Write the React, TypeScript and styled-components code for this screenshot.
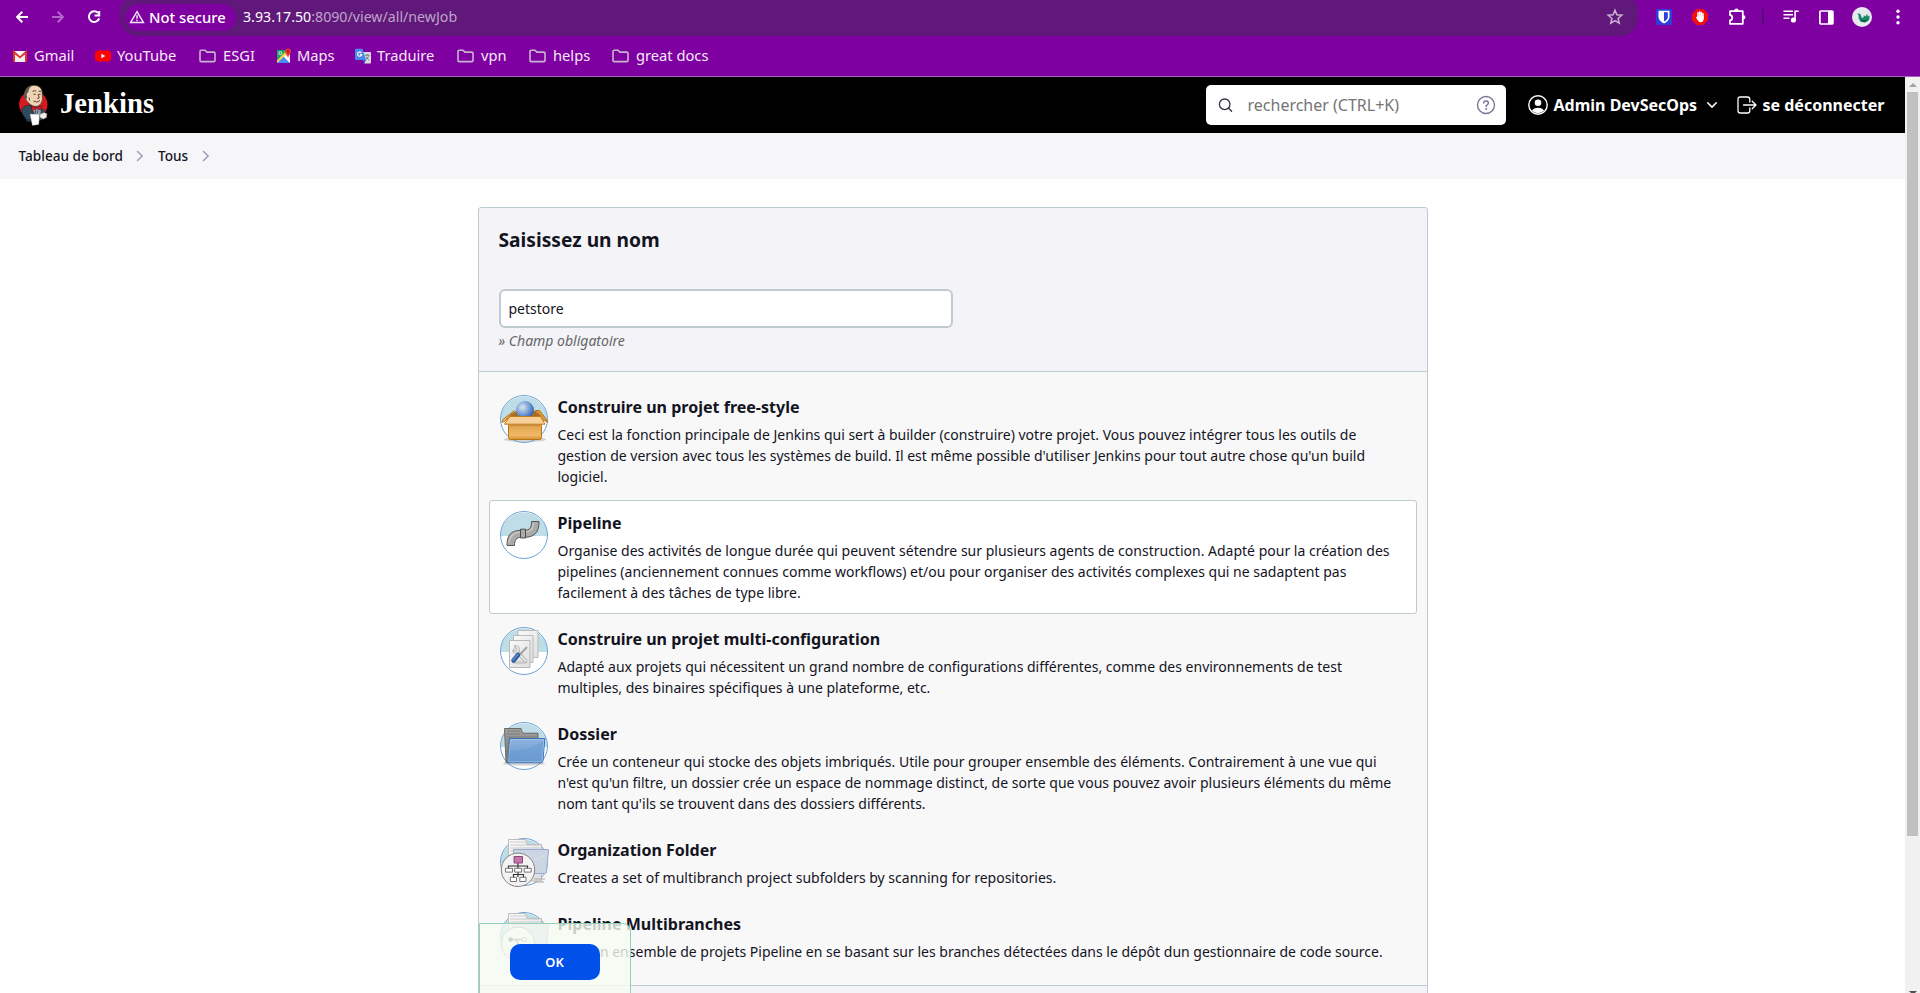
import React from "react";
import styled, { createGlobalStyle } from "styled-components";

const GlobalStyle = createGlobalStyle`
  *, *::before, *::after { box-sizing: border-box; }
  html, body { margin: 0; padding: 0; overflow: hidden; background: #fff; }
  body { font-family: "Noto Sans", sans-serif; color: #14141f; font-size: 14px; }
  svg { display: block; flex: none; }
`;

const Window = styled.div`
  width: 1920px;
  height: 993px;
  display: flex;
  flex-direction: column;
  overflow: hidden;
  background: #fff;
`;

/* Browser chrome */

const Toolbar = styled.div`
  height: 36px;
  flex: none;
  display: flex;
  background: #7f00a1;
  color: #fff;
`;

const NavButtons = styled.div`
  width: 120px;
  padding: 7px 0 0 12px;
  display: flex;
  gap: 16px;
`;

const Omnibox = styled.div`
  width: 1518px;
  height: 36px;
  padding: 0 14px 8px 5px;
  display: flex;
  align-items: center;
  background: #60197a;
  border-radius: 8px 8px 18px 18px;
`;

const SecurityChip = styled.div`
  width: 111px;
  height: 27px;
  margin-top: 7px;
  padding: 0 0 1px 4px;
  display: flex;
  align-items: center;
  gap: 4px;
  border-radius: 14px;
  background: #7f00a1;
  font-size: 14.8px;
  font-weight: 500;
  white-space: nowrap;
`;

const Url = styled.div`
  flex: 1;
  margin: 5px 0 0 7px;
  font-size: 14.2px;
  color: #bfa3ca;
  white-space: nowrap;
`;

const Host = styled.span`
  color: #fff;
`;

const StarSlot = styled.div`
  margin-top: 6px;
`;

const Extensions = styled.div`
  flex: 1;
  display: grid;
  grid-template-columns: 36px 36px 37px 16px 39px 32px 40px 32px;
  justify-items: center;
  align-items: center;
  height: 34px;
  padding-left: 8px;
`;

const Separator = styled.div`
  width: 2px;
  height: 16px;
  background: #560c78;
`;

const Bookmarks = styled.div`
  height: 41px;
  flex: none;
  display: flex;
  padding-left: 12px;
  background: #7f00a1;
  border-bottom: 1px solid #a65fbb;
  color: #f6e9f9;
  font-size: 14.7px;
`;

const Bookmark = styled.div<{ $width: number; $gap: number }>`
  width: ${(p) => p.$width}px;
  height: 40px;
  display: flex;
  align-items: center;
  gap: ${(p) => p.$gap}px;
  white-space: nowrap;
`;

const BookmarkLabel = styled.span`
  line-height: 20px;
  padding-bottom: 2px;
`;

/* Page */

const Viewport = styled.div`
  flex: 1;
  min-height: 0;
  display: flex;
`;

const Page = styled.div`
  width: 1905px;
  position: relative;
  overflow: hidden;
`;

const Header = styled.header`
  height: 56px;
  display: flex;
  align-items: center;
  padding-left: 18px;
  background: #000;
  color: #fff;
`;

const Brand = styled.div`
  flex: 1;
  display: flex;
  align-items: center;
  gap: 11px;
`;

const BrandName = styled.span`
  margin-top: -5px;
  font: bold 28.7px/34px "Liberation Serif", serif;
`;

const SearchBox = styled.div`
  width: 300px;
  height: 40px;
  margin-right: 22px;
  padding: 0 10px 0 12px;
  display: flex;
  align-items: center;
  border-radius: 5px;
  background: #fff;
`;

const Placeholder = styled.span`
  flex: 1;
  margin-left: 14.5px;
  font-size: 16px;
  color: #757575;
`;

const HeaderLink = styled.div<{ $width: number }>`
  width: ${(p) => p.$width}px;
  display: flex;
  align-items: center;
  font-size: 16px;
  font-weight: 700;
  white-space: nowrap;
`;

const LinkLabel = styled.span`
  margin: 0 9px 0 5.5px;
`;

const Breadcrumbs = styled.nav`
  height: 46px;
  display: flex;
  align-items: center;
  gap: 13.5px;
  padding: 0 0 1px 18.5px;
  background: #f6f6f8;
  font-size: 13.6px;
  font-weight: 500;
`;

const Panel = styled.main`
  width: 950px;
  margin: 28px auto 0;
  border: 1px solid #bdcacf;
  border-radius: 3px;
  background: #f3f3f8;
`;

const NameSection = styled.section`
  height: 163px;
  padding: 18px 20px 0;
`;

const Heading = styled.h1`
  margin: 0 0 35px;
  font-size: 19.2px;
  line-height: 28px;
  font-weight: 700;
`;

const NameInput = styled.input`
  display: block;
  width: 454px;
  height: 39px;
  padding: 0 8px;
  border: 2px solid #bfcbce;
  border-radius: 6px;
  background: #fff;
  color: #14141f;
  font: 14px "Noto Sans", sans-serif;
  outline: none;
`;

const Hint = styled.div`
  margin-top: 2px;
  color: #666;
  font-size: 14px;
  line-height: 21px;
  font-style: italic;
`;

const ItemList = styled.section`
  padding: 12px 10px 10px;
  border-top: 1px solid #bdcacf;
  border-bottom: 1px solid #bdcacf;
  background: #f8f8f8;
`;

const Item = styled.div<{ $selected?: boolean }>`
  display: flex;
  gap: 10px;
  margin-bottom: 2px;
  padding: 10px;
  border: 1px solid ${(p) => (p.$selected ? "#bdcacf" : "transparent")};
  border-radius: 3px;
  background: ${(p) => (p.$selected ? "#fff" : "transparent")};
`;

const ItemText = styled.div`
  flex: 1;
`;

const ItemTitle = styled.h2`
  margin: 0 0 5px;
  font-size: 16.05px;
  line-height: 24px;
  font-weight: 700;
`;

const ItemDescription = styled.p`
  margin: 0;
  font-size: 14px;
  line-height: 21px;
  color: #14141f;
`;

const Filler = styled.div`
  height: 60px;
`;

const SubmitBar = styled.div`
  position: absolute;
  left: 479px;
  bottom: -10px;
  width: 152px;
  height: 80px;
  padding: 20px 0 0 30px;
  border: 1px solid #93d0b9;
  border-top-right-radius: 8px;
  background: rgba(245, 251, 241, 0.8);
`;

const OkButton = styled.button`
  display: block;
  width: 90px;
  height: 36px;
  padding: 0 1px 0 0;
  border: 0;
  border-radius: 10px;
  background: #0150e9;
  color: #fff;
  font: 600 12.8px "Noto Sans", sans-serif;
`;

const Scrollbar = styled.div`
  width: 15px;
  height: 100%;
  display: flex;
  flex-direction: column;
  align-items: center;
  background: #f1f1f1;
`;

const Arrow = styled.div<{ $down?: boolean }>`
  width: 0;
  height: 0;
  flex: none;
  border: 4px solid transparent;
  ${(p) =>
    p.$down
      ? "border-top-color: #505050; border-bottom: 0; margin-top: 155px;"
      : "border-bottom-color: #a3a3a3; border-top: 0; margin: 6px 0 5px;"}
`;

const Thumb = styled.div`
  width: 11px;
  height: 744px;
  flex: none;
  background: #c1c1c1;
`;

/* Icons */

const BackIcon = ({ dim, flip }: { dim?: boolean; flip?: boolean }) => (
  <svg width="20" height="20" viewBox="0 0 20 20" fill="none" stroke={dim ? "#b266c7" : "#fff"} strokeWidth="2">
    <g transform={flip ? "translate(20 0) scale(-1 1)" : undefined}>
      <path d="M16 10H5.5M10.3 4.8 5.1 10l5.2 5.2" />
    </g>
  </svg>
);

const ReloadIcon = () => (
  <svg width="20" height="20" viewBox="0 0 20 20" fill="none" stroke="#fff" strokeWidth="2">
    <path d="M14.2 6.2A5.3 5.3 0 1 0 15.2 11.4" />
    <path d="M15.2 4v4.4h-4.6" />
  </svg>
);

const WarningIcon = () => (
  <svg width="16" height="14" viewBox="0 0 16 14" fill="none" stroke="#f5e6fa" strokeWidth="1.5">
    <path d="M8 1.6 14.4 12.4H1.6Z" />
    <path d="M8 5.2v3.6M8 9.7v1.6" />
  </svg>
);

const StarIcon = () => (
  <svg width="18" height="18" viewBox="0 0 18 18" fill="none" stroke="#c9b2d2" strokeWidth="1.5">
    <path d="m9 2.3 1.9 4.5 4.9.4-3.7 3.2 1.1 4.8L9 12.7l-4.2 2.5 1.1-4.8-3.7-3.2 4.900-.4Z" />
  </svg>
);

const BitwardenIcon = () => (
  <svg width="16" height="16" viewBox="0 0 16 16">
    <rect width="16" height="16" rx="2" fill="#2b3fdc" />
    <path d="M2.5 1.7h11V8c0 3-2.5 5-5.5 6.4C5 13 2.5 11 2.5 8Z" fill="#fff" />
    <path d="M8 3.3h3.8V8c0 2-1.6 3.4-3.8 4.6Z" fill="#2b3fdc" />
  </svg>
);

const BlockerIcon = () => (
  <svg width="16" height="16" viewBox="0 0 16 16">
    <path d="M4.7 0h6.6L16 4.7v6.6L11.3 16H4.7L0 11.3V4.7Z" fill="#f40d12" />
    <g stroke="#fff" strokeWidth="1.5" strokeLinecap="round" fill="none">
      <path d="M6 8V3.8M7.7 8V2.9M9.4 8V3.5M11 9V4.8M4.8 8.6l1.6 2" />
    </g>
    <path d="M5.3 7.5h6.4v2.3c0 2-1.2 3.4-3 3.4-1.7 0-2.4-.8-3.4-3.1Z" fill="#fff" />
  </svg>
);

const PuzzleIcon = () => (
  <svg width="18" height="18" viewBox="0 0 18 18" fill="none" stroke="#fff" strokeWidth="1.8" strokeLinejoin="round">
    <path d="M2 3.2h12.8v12.6H2v-3.3c3-.2 3-5.2 0-5.4Z" />
    <path d="M6.3 3c0-3.2 4.4-3.2 4.4 0Z" fill="#fff" stroke="none" />
    <path d="M15 7.1c3.2 0 3.2 4.4 0 4.4Z" fill="#fff" stroke="none" />
  </svg>
);

const QueueMusicIcon = () => (
  <svg width="18" height="16" viewBox="0 0 18 16" fill="none" stroke="#fff" strokeWidth="1.6">
    <path d="M1.5 2.2h9.5M1.5 5.7h9.5M1.5 9.2h6" />
    <path d="M13.1 11V2.2h3.6" />
    <circle cx="11.4" cy="11" r="1.8" fill="#fff" />
  </svg>
);

const SidePanelIcon = () => (
  <svg width="15" height="15" viewBox="0 0 15 15">
    <rect x=".9" y="1" width="13" height="13" rx="1" fill="none" stroke="#fff" strokeWidth="1.7" />
    <path d="M9 1h5v13H9Z" fill="#fff" />
  </svg>
);

const AvatarIcon = () => (
  <svg width="20" height="20" viewBox="0 0 20 20">
    <circle cx="10" cy="10" r="10" fill="#e8e9ec" />
    <path d="M5 6.200 8.500 7l1.200 3.800 1.800-.3.300-2.300 1.900 1.200 1.400-3 .7 3.200 1.800-1.200-.3 3.800-1.500 2-3.200 1.300-4-.8-1.900-3.200L6.500 8Z" fill="#15876b" />
    <path d="m8.500 12.500 3 1 4-.7-2.500 2.400-3.500-.7Z" fill="#0a5646" />
  </svg>
);

const DotsIcon = () => (
  <svg width="4" height="16" viewBox="0 0 4 16" fill="#fff">
    <circle cx="2" cy="2.2" r="1.7" />
    <circle cx="2" cy="8" r="1.7" />
    <circle cx="2" cy="13.8" r="1.7" />
  </svg>
);

const GmailIcon = () => (
  <svg width="16" height="16" viewBox="0 0 16 16">
    <rect x="1" y="3" width="14" height="11" rx="1" fill="#eee" />
    <path d="M2 14V4l6 5.6L14 4v10" fill="none" stroke="#e5302a" strokeWidth="2" />
    <path d="M2.9 3h10.2L8 7.7Z" fill="#f8f8f8" />
    <path d="M3 14V6.4l5 4.2 5-4.2V14Z" fill="#eee" />
  </svg>
);

const YouTubeIcon = () => (
  <svg width="16" height="16" viewBox="0 0 16 16">
    <rect y="2.4" width="16" height="11.2" rx="3" fill="#f00" />
    <path d="M6.4 5.7v4.6l4-2.3Z" fill="#fff" />
  </svg>
);

const FolderIcon = () => (
  <svg width="17" height="16" viewBox="0 0 17 16" fill="none" stroke="#c9b4cf" strokeWidth="1.6" strokeLinejoin="round">
    <path d="M1 3.4q0-1.2 1.1-1.2h4l1.8 1.9h6.9q1.2 0 1.2 1.1v7.2q0 1.2-1.2 1.2H2.2Q1 13.6 1 12.4Z" />
  </svg>
);

const MapsIcon = () => (
  <svg width="16" height="16" viewBox="0 0 16 16">
    <rect x="1" y="2" width="13" height="13" rx="1" fill="#e8e8e8" />
    <path d="M1 2h9v3L1 14Z" fill="#1da362" />
    <path d="M1 14.9 7.5 8.5l6.2 6.4Z" fill="#4a89f3" />
    <path d="M1 12.4v2.4L12.5 4l-2.2-1.2Z" fill="#fdd33c" />
    <path d="m8 8.5 6 6V12l-4.5-5Z" fill="#fff" />
    <circle cx="4.3" cy="5.2" r="1.5" fill="none" stroke="#d7f0e0" strokeWidth="1" />
    <path d="M12 .6c2 0 3 1.4 3 3 0 2-2.2 3.2-3 6-.8-2.8-3-4-3-6 0-1.6 1-3 3-3Z" fill="#ea3535" />
    <circle cx="12" cy="3.6" r="1" fill="#8e1919" />
  </svg>
);

const TranslateIcon = () => (
  <svg width="16" height="16" viewBox="0 0 16 16">
    <path d="M5.5 4H15q1 0 1 1v9.5q0 1-1 1H9.5Z" fill="#d9dbe0" />
    <path d="M1 .8h6.5L11 12H1q-1 0-1-1V1.8q0-1 1-1Z" fill="#4d87ee" />
    <path d="M8 12h3l-1.7 3.3Z" fill="#2d5fc0" />
    <path d="M6.3 4.9a2.1 2.1 0 1 0 .4 1.7H4.9" fill="none" stroke="#fff" strokeWidth="1.1" />
    <path d="M10 7.2h4.7M12.2 6v1.2M13.7 7.4c-.5 2-1.7 3.3-2.6 4M10.9 9l3.4 3.5" fill="none" stroke="#6f7b83" strokeWidth="1" />
  </svg>
);

const JenkinsLogo = () => (
  <svg width="31" height="42" viewBox="0 0 31 42">
    <ellipse cx="15.3" cy="20.5" rx="14.2" ry="13.8" fill="#d71920" />
    <path d="M5 27.5 11.5 21l9 .5 6 4 1 6-4 4.5-5 1.5H9Z" fill="#2f4a5c" />
    <path d="M3.5 25q5-5 9-3.5l3 5.5-3 9H9Q3.5 31 3.5 25Z" fill="#304b5d" stroke="#17242d" strokeWidth=".7" />
    <path d="M9 17.5Q5.5 13 7 7.5 9 1.5 16 1.3q7 0 8.2 6.6l.3 7.5q-.8 5.5-5.2 7-4.5.6-6.8-1.8Z" fill="#efd3b2" stroke="#443630" strokeWidth=".7" />
    <path d="M7.5 15.5Q4.5 7.5 9.5 3.8q2.3-2 5-2.3-3.5 2-4.2 6.2L8.6 10l.6 4Z" fill="#5b5652" />
    <path d="M14.5 7.5q2-1.5 3.7-.4M20.5 7.2l2.5.2M15.5 10.3h2.3M20.8 10.3h1.7M20 10l1.2 4-2 .6M15.5 17q3.5 2.5 6.5-.5M11 13.5q1 1.5.3 3" fill="none" stroke="#4c3529" strokeWidth=".9" />
    <path d="m13.5 21.5 4.5 2.2 5-2.5.8 5-4.8-1.5-5 2.7Z" fill="#d31b27" stroke="#641015" strokeWidth=".6" />
    <path d="m15 26.5 4-1.5 4 1.5-1 5-4 .5Z" fill="#8e9eac" />
    <path d="M17.5 26v5M19.8 26.5l-.5 3" stroke="#405364" strokeWidth="1" />
    <path d="m12 30 9.5.3-.7 10.2-6.5 1Z" fill="#fff" stroke="#888" strokeWidth=".4" />
    <path d="m22 30 4-1.5 3 1-.3 4-3.5 1.7-3.5-2Z" fill="#f1eee9" stroke="#555" strokeWidth=".5" />
  </svg>
);

const SearchIcon = () => (
  <svg width="15" height="15" viewBox="0 0 15 15" fill="none" stroke="#32323f" strokeWidth="1.3" strokeLinecap="round">
    <circle cx="6.7" cy="6.3" r="5.3" />
    <path d="m10.6 10.2 3 3" />
  </svg>
);

const HelpIcon = () => (
  <svg width="20" height="20" viewBox="0 0 20 20" fill="none" stroke="#77779a" strokeWidth="1.4" strokeLinecap="round">
    <circle cx="10" cy="10" r="8.5" />
    <path d="M7.7 8.1c0-3 4.7-2.8 4.7 0 0 1.7-2.3 1.7-2.3 3.3" strokeWidth="1.5" />
    <circle cx="10.1" cy="13.9" r=".6" fill="#77779a" strokeWidth=".7" />
  </svg>
);

const UserIcon = () => (
  <svg width="20" height="20" viewBox="0 0 20 20">
    <circle cx="10" cy="10" r="9.2" fill="none" stroke="#fff" strokeWidth="1.4" />
    <circle cx="10" cy="7.8" r="3.3" fill="#fff" />
    <path d="M4 15.8c1.4-4.2 10.6-4.2 12 0a8.6 8.6 0 0 1-12 0Z" fill="#fff" />
  </svg>
);

const ChevronDown = () => (
  <svg width="12" height="8" viewBox="0 0 12 8" fill="none" stroke="#fff" strokeWidth="1.5" strokeLinecap="round" strokeLinejoin="round">
    <path d="m1.7 1.8 4.3 4.3 4.3-4.3" />
  </svg>
);

const LogoutIcon = () => (
  <svg width="20" height="20" viewBox="0 0 20 20" fill="none" stroke="#fff" strokeWidth="1.3" strokeLinecap="round" strokeLinejoin="round">
    <path d="M12.8 7V4.3q0-2.3-2.3-2.3H3.3Q1 2 1 4.3v11.4q0 2.3 2.3 2.3h7.2q2.3 0 2.3-2.3V13M6.5 10h12.3M15.2 6.2 19 10l-3.8 3.8" />
  </svg>
);

const ChevronRight = () => (
  <svg width="8" height="12" viewBox="0 0 8 12" fill="none" stroke="#9c9cb4" strokeWidth="1.5" strokeLinecap="round" strokeLinejoin="round">
    <path d="m1.5 1.5 4.7 4.5-4.7 4.5" />
  </svg>
);

const ItemIcon = ({ children }: { children: React.ReactNode }) => (
  <svg width="48" height="48" viewBox="0 0 48 48" overflow="visible">
    <defs>
      <linearGradient id="box" x1="0" y1="0" x2="0" y2="1">
        <stop offset="0" stopColor="#d99b45" />
        <stop offset=".75" stopColor="#f1b967" />
        <stop offset="1" stopColor="#d48f31" />
      </linearGradient>
      <radialGradient id="ball" cx=".36" cy=".35" r=".65">
        <stop offset="0" stopColor="#dce9e8" />
        <stop offset=".45" stopColor="#8eafe0" />
        <stop offset="1" stopColor="#3868b6" />
      </radialGradient>
      <linearGradient id="blueFolder" x1="0" y1="0" x2="0" y2="1">
        <stop offset="0" stopColor="#8fb3de" />
        <stop offset="1" stopColor="#6497d0" />
      </linearGradient>
      <linearGradient id="greyFolder" x1="0" y1="0" x2="0" y2="1">
        <stop offset="0" stopColor="#a0a09d" />
        <stop offset="1" stopColor="#777" />
      </linearGradient>
      <linearGradient id="paper" x1="0" y1="0" x2="1" y2="1">
        <stop offset="0" stopColor="#fafafa" />
        <stop offset="1" stopColor="#dedede" />
      </linearGradient>
    </defs>
    <circle cx="24" cy="24" r="23.5" fill="#fff" />
    <path d="M.5 25a23.5 23.5 0 1 1 47 0Z" fill="#bfdde6" />
    <circle cx="24" cy="24" r="23.5" fill="none" stroke="#6ea3d8" />
    {children}
  </svg>
);

const FreestyleIcon = () => (
  <ItemIcon>
    <ellipse cx="25" cy="44.5" rx="21" ry="2.5" fill="#888" opacity=".35" />
    <path d="m9 21 7-5h19l6 5v9H9Z" fill="#a96c1c" />
    <path d="m9.500 21 5-5.500L3 24.500l-1.500 2.700 3.200-.7Z" fill="#efb561" stroke="#b87113" />
    <path d="m40 20-5-4.500h4.500l5.500 7 3 4.700-6-2.700Z" fill="#dc9b40" stroke="#b87113" />
    <circle cx="25" cy="15" r="9" fill="url(#ball)" />
    <path d="M8.500 27h33v15.500q0 2-2 2h-29q-2 0-2-2Z" fill="url(#box)" stroke="#b97516" />
    <path d="M9.700 21.500h30.800l4.500 7.700H4.500Z" fill="#f8cf98" stroke="#c07b1d" />
    <path d="M10 30.500h30" stroke="#c98d3b" strokeWidth="1.5" />
  </ItemIcon>
);

const PipelineIcon = () => (
  <ItemIcon>
    <path
      d="M7 34.500c0-10.500 4-15 14-15.200h4c4.500-.2 6.500-2 6.500-8.800H39c0 11-4.500 15.200-13 15.800h-5c-4.500.2-6.500 2.500-6.500 8.200Z"
      fill="#aaa"
      stroke="#555"
      strokeLinejoin="round"
    />
    <path d="M9 32c.5-7 4-10.800 12-11h4.500c5.500-.5 8-4 8-9" fill="none" stroke="#c6c6c6" strokeWidth="1.5" />
    <path d="M20.500 18.200h5v8.800h-5Z" fill="#aaa" stroke="#4c4c4c" />
  </ItemIcon>
);

const MatrixIcon = () => (
  <ItemIcon>
    <path d="M18 3.500h20v27H18Z" fill="url(#paper)" stroke="#bbb" />
    <path d="M13.500 8.500H33v27H13.500Z" fill="url(#paper)" stroke="#bbb" />
    <path d="M9.500 13.500H30v27H9.500Z" fill="url(#paper)" stroke="#b8b8b8" />
    <ellipse cx="20" cy="35.5" rx="8" ry="1.7" fill="#ccc" />
    <path d="m15 22 10.500 12" stroke="#aaa" strokeWidth="3.5" strokeLinecap="round" />
    <path d="m15 22 10.500 12" stroke="#e7e7e7" strokeWidth="2" strokeLinecap="round" />
    <path d="M14.500 18.500q5 0 5 4t-4 4q-2.500 0-3-3l3 .8 1.700-1.600Z" fill="#eee" stroke="#aaa" strokeWidth=".9" />
    <path d="m27 20-9 9.500" stroke="#a3a3a3" strokeWidth="2" />
    <path d="m18 28-4.500 5.500" stroke="#315c9c" strokeWidth="4.5" strokeLinecap="round" />
    <path d="m17.700 27.500-4.700 5.500" stroke="#628fd1" strokeWidth="1.5" strokeLinecap="round" />
  </ItemIcon>
);

const DirectoryIcon = () => (
  <ItemIcon>
    <ellipse cx="24" cy="41.5" rx="21" ry="2" fill="#777" opacity=".35" />
    <path d="M4.500 6.500H21l1.500 4.700H38V39L6 40.500Z" fill="url(#greyFolder)" stroke="#686868" />
    <path d="M7 9h13M7 12h13M7 15h30M7 18h30M7 21h4M7 24h4M7 27h4M7 30h3M7 33h3" stroke="#737373" strokeWidth=".8" />
    <path d="M9.500 16.500h35.300L43 38.500q-.3 2.200-2.200 2.200H7.500q.8-1 1-3Z" fill="url(#blueFolder)" stroke="#3b70b5" />
    <path d="M10.500 17.500h33.200L42 38.500q-.2 1.200-1.200 1.200H8.500Z" fill="none" stroke="#a6c4e6" strokeWidth=".8" />
    <path d="M10 29q21-1 33-10l-.8 15Q20 34 9.500 37Z" fill="#6799d0" opacity=".5" />
  </ItemIcon>
);

const StackedFolder = ({ children }: { children: React.ReactNode }) => (
  <ItemIcon>
    <path d="M8.500 1.500h17l1.500 5h14.500V43h-33Z" fill="url(#paper)" stroke="#bbb" />
    <path d="M10 4h15M10 7h30M10 10h30M10 13h3" stroke="#c2c2c2" strokeWidth=".8" />
    <path d="M34 41h11M34 44h10" stroke="#aaa" />
    <path d="M13.500 11.500h35L46.500 34q-.2 1.500-2 1.500H15Z" fill="#cbd5e3" stroke="#95acd2" />
    <path d="M15 25q19-1 32-9" stroke="#d9e0e9" fill="none" />
    <circle cx="18" cy="31.8" r="16.7" fill="#f3f3f3" stroke="#818181" />
    {children}
  </ItemIcon>
);

const OrganizationIcon = () => (
  <StackedFolder>
    <path d="M18 25v4M8.500 31v-3h19v3M18 28v11M13.500 39v-2.500h10V39" fill="none" stroke="#333" strokeWidth="1.2" />
    <path d="M14 18.500h8.500V25H14Z" fill="#c276ac" stroke="#8c487b" />
    <path d="M5.500 30.300h7v3.800h-7ZM14.600 30.300h7v3.800h-7ZM24.200 30.300h7v3.800h-7ZM10.300 39.300h6.200v4.200h-6.200ZM19.800 39.300H26v4.200h-6.200Z" fill="#fff" stroke="#777" />
  </StackedFolder>
);

const MultibranchIcon = () => (
  <StackedFolder>
    <path d="M10 27.500h16M15 27.500q3 1 3 5v8h5" fill="none" stroke="#666" strokeWidth="1.5" />
    <circle cx="10.5" cy="27.5" r="2.2" fill="#444" />
    <circle cx="24.5" cy="27.5" r="2.2" fill="#fff" stroke="#666" />
  </StackedFolder>
);

type BookmarkEntry = { label: string; icon: React.ReactNode; width: number; gap: number };

const bookmarks: BookmarkEntry[] = [
  { label: "Gmail", icon: <GmailIcon />, width: 83, gap: 6 },
  { label: "YouTube", icon: <YouTubeIcon />, width: 104, gap: 6 },
  { label: "ESGI", icon: <FolderIcon />, width: 77, gap: 7 },
  { label: "Maps", icon: <MapsIcon />, width: 79, gap: 5 },
  { label: "Traduire", icon: <TranslateIcon />, width: 102, gap: 6 },
  { label: "vpn", icon: <FolderIcon />, width: 72, gap: 7 },
  { label: "helps", icon: <FolderIcon />, width: 83, gap: 7 },
  { label: "great docs", icon: <FolderIcon />, width: 110, gap: 7 },
];

const items = [
  {
    icon: <FreestyleIcon />,
    title: "Construire un projet free-style",
    text: "Ceci est la fonction principale de Jenkins qui sert à builder (construire) votre projet. Vous pouvez intégrer tous les outils de gestion de version avec tous les systèmes de build. Il est même possible d'utiliser Jenkins pour tout autre chose qu'un build logiciel.",
  },
  {
    icon: <PipelineIcon />,
    title: "Pipeline",
    selected: true,
    text: "Organise des activités de longue durée qui peuvent sétendre sur plusieurs agents de construction. Adapté pour la création des pipelines (anciennement connues comme workflows) et/ou pour organiser des activités complexes qui ne sadaptent pas facilement à des tâches de type libre.",
  },
  {
    icon: <MatrixIcon />,
    title: "Construire un projet multi-configuration",
    text: "Adapté aux projets qui nécessitent un grand nombre de configurations différentes, comme des environnements de test multiples, des binaires spécifiques à une plateforme, etc.",
  },
  {
    icon: <DirectoryIcon />,
    title: "Dossier",
    text: "Crée un conteneur qui stocke des objets imbriqués. Utile pour grouper ensemble des éléments. Contrairement à une vue qui n'est qu'un filtre, un dossier crée un espace de nommage distinct, de sorte que vous pouvez avoir plusieurs éléments du même nom tant qu'ils se trouvent dans des dossiers différents.",
  },
  {
    icon: <OrganizationIcon />,
    title: "Organization Folder",
    text: "Creates a set of multibranch project subfolders by scanning for repositories.",
  },
  {
    icon: <MultibranchIcon />,
    title: "Pipeline Multibranches",
    text: "Crée un ensemble de projets Pipeline en se basant sur les branches détectées dans le dépôt dun gestionnaire de code source.",
  },
];

export default function App() {
  return (
    <Window>
      <GlobalStyle />
      <Toolbar>
        <NavButtons>
          <BackIcon />
          <BackIcon dim flip />
          <ReloadIcon />
        </NavButtons>
        <Omnibox>
          <SecurityChip>
            <WarningIcon />
            Not secure
          </SecurityChip>
          <Url>
            <Host>3.93.17.50</Host>:8090/view/all/newJob
          </Url>
          <StarSlot>
            <StarIcon />
          </StarSlot>
        </Omnibox>
        <Extensions>
          <BitwardenIcon />
          <BlockerIcon />
          <PuzzleIcon />
          <Separator />
          <QueueMusicIcon />
          <SidePanelIcon />
          <AvatarIcon />
          <DotsIcon />
        </Extensions>
      </Toolbar>
      <Bookmarks>
        {bookmarks.map((b) => (
          <Bookmark key={b.label} $width={b.width} $gap={b.gap}>
            {b.icon}
            <BookmarkLabel>{b.label}</BookmarkLabel>
          </Bookmark>
        ))}
      </Bookmarks>
      <Viewport>
        <Page>
          <Header>
            <Brand>
              <JenkinsLogo />
              <BrandName>Jenkins</BrandName>
            </Brand>
            <SearchBox>
              <SearchIcon />
              <Placeholder>rechercher (CTRL+K)</Placeholder>
              <HelpIcon />
            </SearchBox>
            <HeaderLink $width={209}>
              <UserIcon />
              <LinkLabel>Admin DevSecOps</LinkLabel>
              <ChevronDown />
            </HeaderLink>
            <HeaderLink $width={168}>
              <LogoutIcon />
              <LinkLabel>se déconnecter</LinkLabel>
            </HeaderLink>
          </Header>
          <Breadcrumbs>
            <span>Tableau de bord</span>
            <ChevronRight />
            <span>Tous</span>
            <ChevronRight />
          </Breadcrumbs>
          <Panel>
            <NameSection>
              <Heading>Saisissez un nom</Heading>
              <NameInput defaultValue="petstore" />
              <Hint>» Champ obligatoire</Hint>
            </NameSection>
            <ItemList>
              {items.map((item) => (
                <Item key={item.title} $selected={item.selected}>
                  {item.icon}
                  <ItemText>
                    <ItemTitle>{item.title}</ItemTitle>
                    <ItemDescription>{item.text}</ItemDescription>
                  </ItemText>
                </Item>
              ))}
            </ItemList>
            <Filler />
          </Panel>
          <SubmitBar>
            <OkButton>OK</OkButton>
          </SubmitBar>
        </Page>
        <Scrollbar>
          <Arrow />
          <Thumb />
          <Arrow $down />
        </Scrollbar>
      </Viewport>
    </Window>
  );
}
